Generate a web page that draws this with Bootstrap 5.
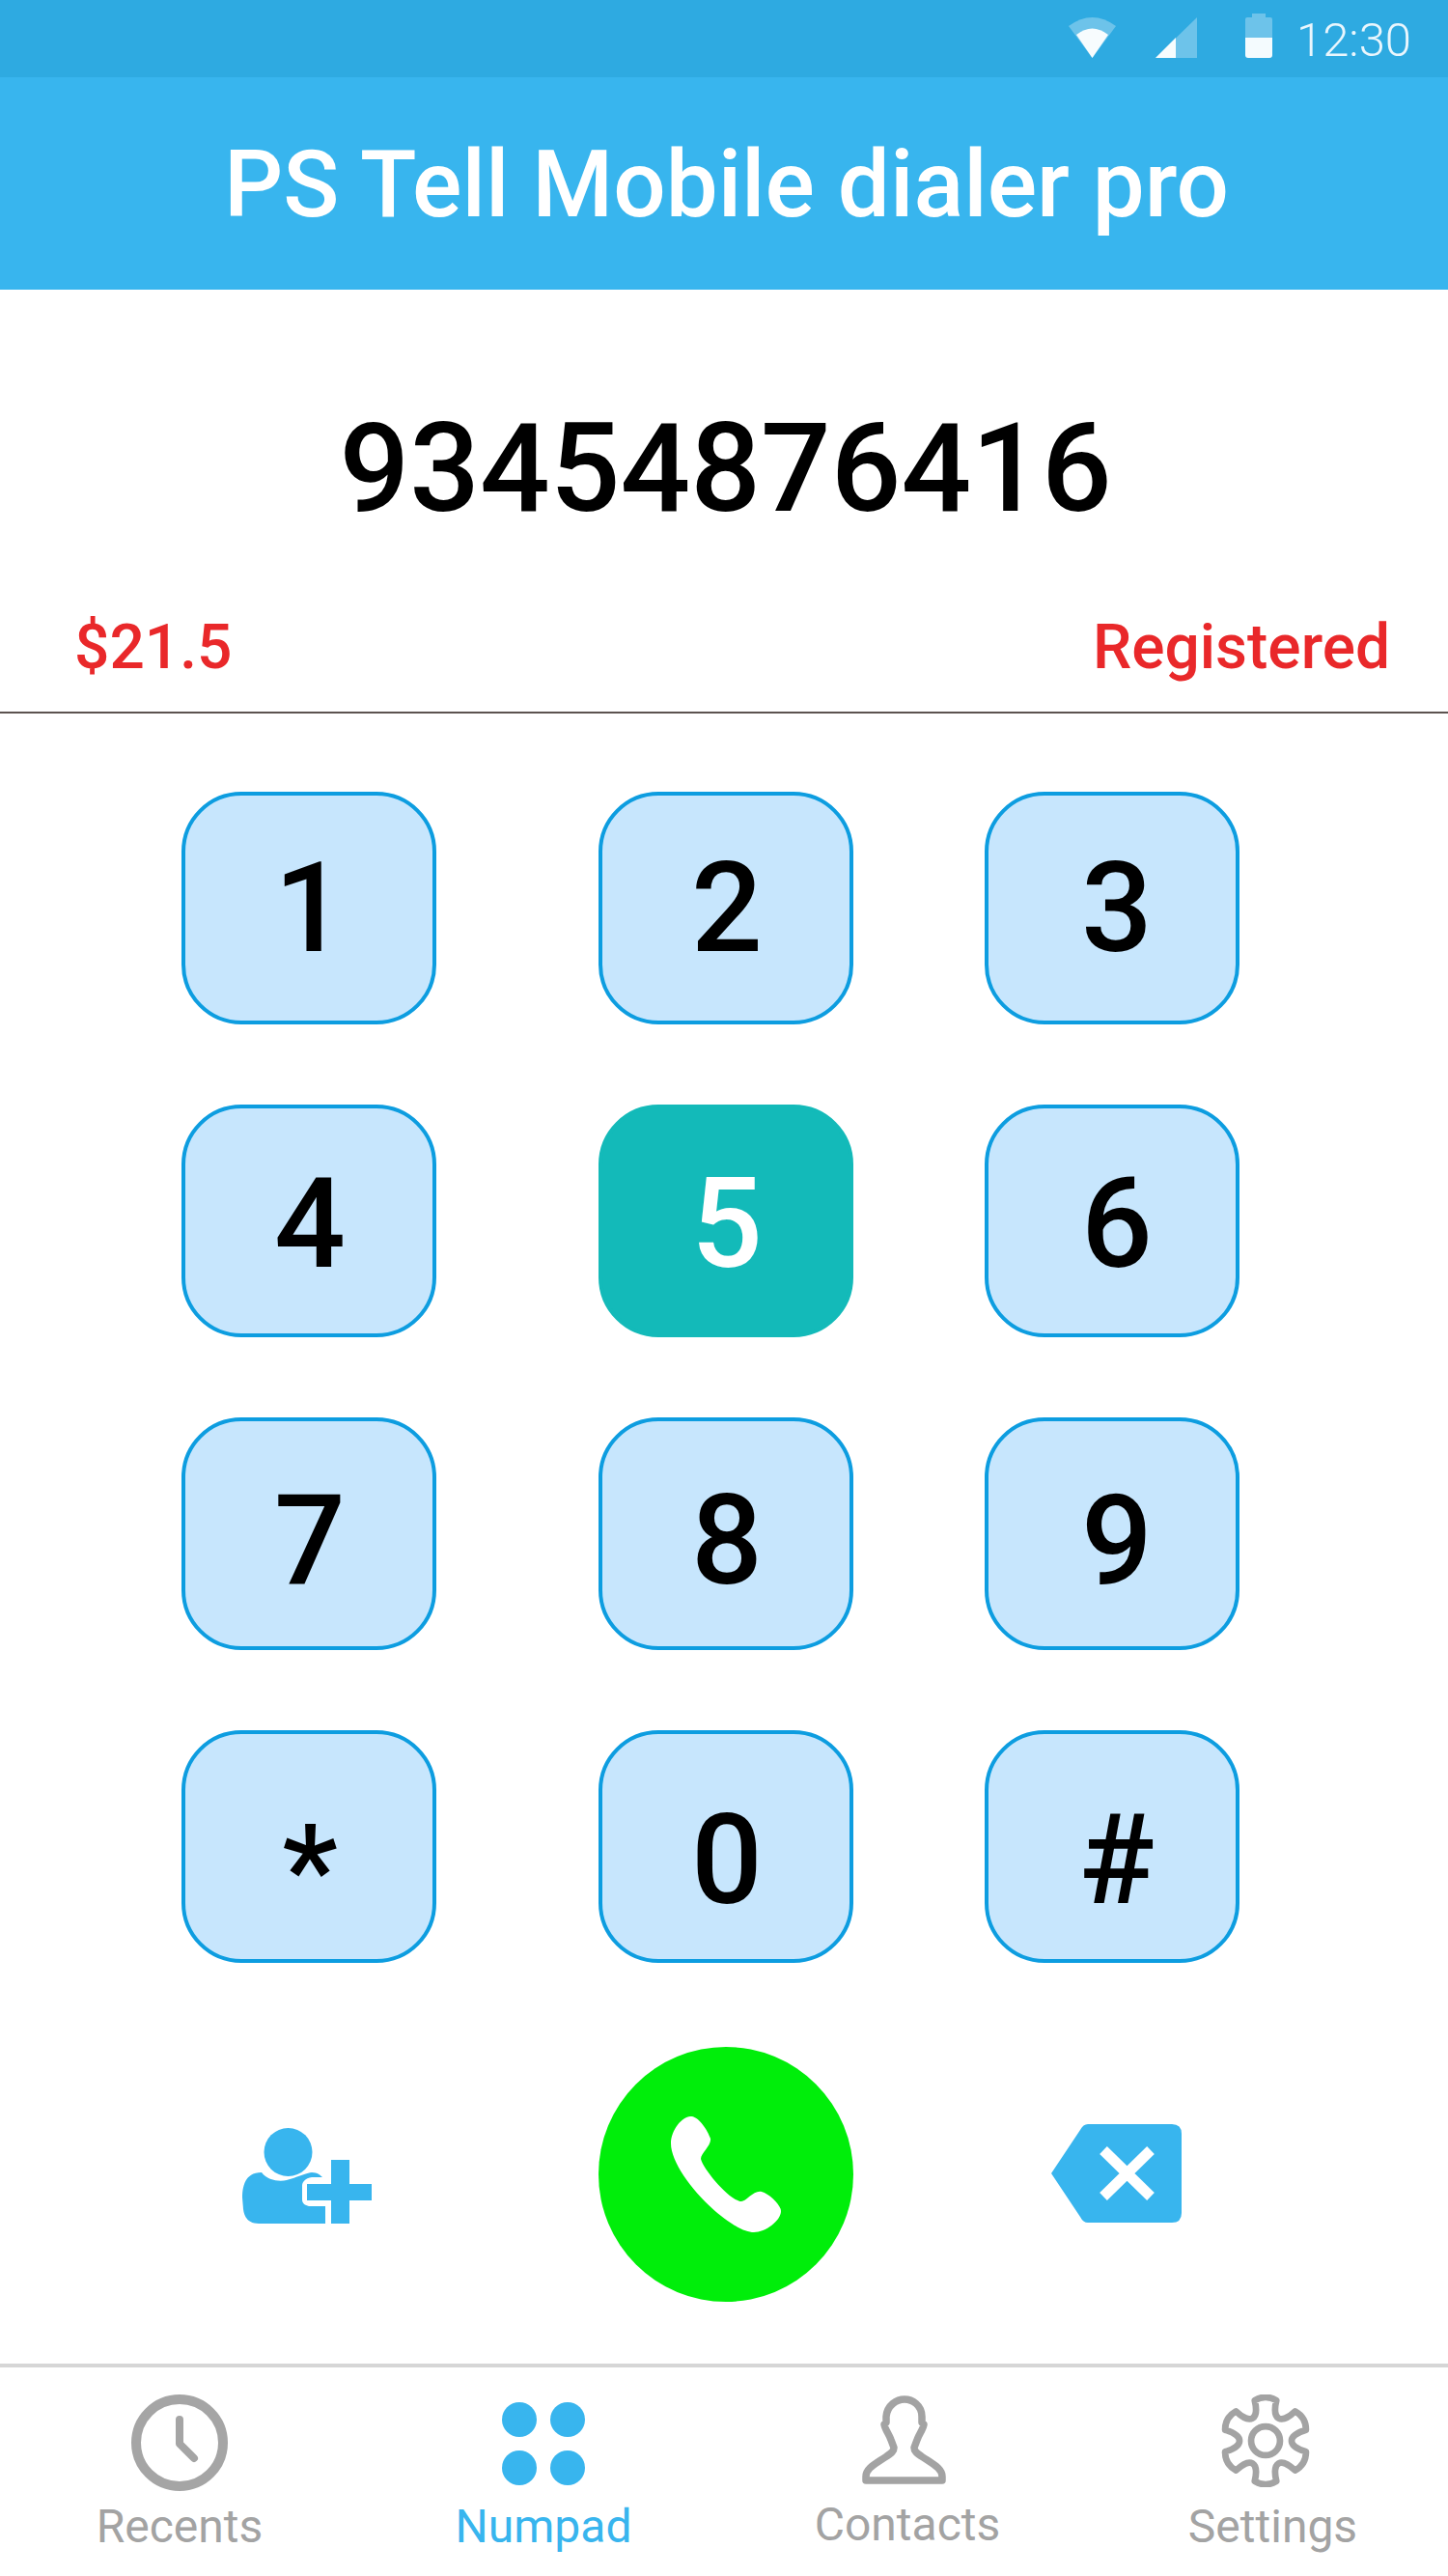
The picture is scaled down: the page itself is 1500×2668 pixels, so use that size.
<!DOCTYPE html>
<html lang="en">
<head>
<meta charset="utf-8">
<title>PS Tell Mobile dialer pro</title>
<link href="https://cdn.jsdelivr.net/npm/bootstrap@5.3.0/dist/css/bootstrap.min.css" rel="stylesheet">
<style>
html,body{margin:0;background:#fff}
body{width:1500px;height:2668px;overflow:hidden;font-family:Roboto,"Liberation Sans",sans-serif}
.status-strip{height:80px;background:#2eaae1;padding-right:38px;color:#e9f6fd}
.status-time{font-size:49px;font-weight:300;line-height:1;margin-left:25px;margin-top:2px}
.ico-wifi{width:49px;height:42px;margin-right:41px;margin-top:-2px}
.ico-signal{width:43px;height:42px;margin-right:50px;margin-top:-2px}
.ico-batt{width:28px;height:46px;margin-top:-6px}
.app-head{height:220px;background:#38b5ee;color:#fff;font-size:96px;font-weight:500;line-height:1;padding:2px 0 0 5px}
.dial-number{height:294px;padding:76px 0 0 3px;font-size:128px;font-weight:500;line-height:1;color:#000}
.info-row{height:145px;padding:0 60px 34px 77px;color:#e9282a;font-size:64px;font-weight:500;line-height:1;border-bottom:2px solid #5c5350}
.pad-grid{display:grid;grid-template-columns:432px 400px 264px;row-gap:83px;padding:81px 0 0 188px}
.pad-key{width:264px;height:241px;border:4px solid #0d9de0;border-radius:62px;background:#c7e6fd;color:#000;font-size:130px;font-weight:500;line-height:1;padding:0 0 0 2px}
.pad-key.is-on{background:#13bab9;border-color:#13bab9;color:#fff}
.pad-key.col-end{padding-left:10px}
.pad-key.row-two{padding-top:6px}
.pad-key.row-three{padding-top:14px}
.pad-key.row-four{padding-top:28px}
.pad-key.row-four.star-key{padding-top:50px}
.act-grid{display:grid;grid-template-columns:432px 400px 264px;padding:87px 0 0 188px;height:415px}
.btn-call{width:264px;height:264px;border-radius:50%;background:#00ee0a;border:0;padding:0}
.ico-phone{width:114px;height:120px}
.ico-add{width:134px;height:99px;margin-left:63px;margin-top:84px}
.ico-back{width:135px;height:102px;margin-left:69px;margin-top:80px}
.tab-strip{height:220px;border-top:4px solid #d6d6d6;padding-left:36px;column-gap:77px}
.tab-item{width:300px;height:216px;font-size:48px;line-height:1;color:#a3a3a3}
.tab-item.is-on{color:#38b5ee}
.tab-art{height:128px;padding-top:28px}
.tab-label{margin-top:13px}
.tab-item.up-label .tab-label{margin-top:11px}
.ico-user{margin-right:7px;margin-top:1px}
.ico-gear{margin-right:12px}
.tab-label.nudge{padding-left:3px}
</style>
</head>
<body>
<div class="status-strip d-flex justify-content-end align-items-center">
  <svg class="ico-wifi" viewBox="0 0 49 42"><path d="M0 9Q24.5-9 49 9L24.5 42Z" fill="#fff" fill-opacity=".3"/><path d="M8 18Q24.5 5 41 18L24.5 42Z" fill="#fff" fill-opacity=".95"/></svg>
  <svg class="ico-signal" viewBox="0 0 43 42"><path d="M43 0V42H0Z" fill="#fff" fill-opacity=".3"/><path d="M21 21V42H0Z" fill="#fff" fill-opacity=".95"/></svg>
  <svg class="ico-batt" viewBox="0 0 28 46"><path d="M7 0H21V4H26Q28 4 28 6V25H0V6Q0 4 2 4H7Z" fill="#fff" fill-opacity=".3"/><path d="M0 25H28V43Q28 46 25 46H3Q0 46 0 43Z" fill="#fff" fill-opacity=".95"/></svg>
  <span class="status-time">12:30</span>
</div>
<header class="app-head d-flex justify-content-center align-items-center">PS Tell Mobile dialer pro</header>
<div class="dial-number d-flex justify-content-center align-items-center">93454876416</div>
<div class="info-row d-flex justify-content-between align-items-end"><span>$21.5</span><span>Registered</span></div>
<div class="pad-grid">
  <button class="btn pad-key" type="button">1</button><button class="btn pad-key" type="button">2</button><button class="btn pad-key col-end" type="button">3</button>
  <button class="btn pad-key row-two" type="button">4</button><button class="btn pad-key row-two is-on" type="button">5</button><button class="btn pad-key row-two col-end" type="button">6</button>
  <button class="btn pad-key row-three" type="button">7</button><button class="btn pad-key row-three" type="button">8</button><button class="btn pad-key row-three col-end" type="button">9</button>
  <button class="btn pad-key row-four star-key" type="button">*</button><button class="btn pad-key row-four" type="button">0</button><button class="btn pad-key row-four col-end" type="button">#</button>
</div>
<div class="act-grid">
  <svg class="ico-add" viewBox="0 0 134 99" fill="#38b5ee"><circle cx="47.500" cy="25" r="25"/><path d="M20 46C26 54 38 56 46 54C54 52 68 46 72 46C78 46 81 49 83 51H72C65 52 62 56 62 60V74C62 78 65 80 69 81H86V99H17C8 99 2 94 1 84L0 72C0 60 3 46 20 46Z"/><path d="M92 33H111V58H134V75H111V99H92V75H67V58H92Z"/></svg>
  <button class="btn btn-call d-flex align-items-center justify-content-center" type="button" aria-label="Call">
    <svg class="ico-phone" viewBox="0 0 114 120" fill="#fff"><path d="M20 0C28-1 38 14 41 23C42 30 31 38 31 44C34 56 62 88 73 88C78 88 86 76 94 78C102 80 114 92 114 98C114 108 98 120 86 120C60 120 0 60 0 28C0 14 12 0 20 0Z"/></svg>
  </button>
  <svg class="ico-back" viewBox="0 0 135 102"><path d="M38 0H125Q135 0 135 10V92Q135 102 125 102H38Q33 102 30 96L0 51L30 6Q33 0 38 0Z" fill="#38b5ee"/><path d="M54 27L103 75M103 27L54 75" stroke="#fff" stroke-width="11" fill="none"/></svg>
</div>
<nav class="tab-strip d-flex">
  <div class="tab-item text-center">
    <div class="tab-art"><svg width="100" height="100" viewBox="0 0 100 100" fill="none" stroke="#a5a5a5"><circle cx="50" cy="50" r="45" stroke-width="10"/><path d="M50 26V51L65 66" stroke-width="8" stroke-linecap="round" stroke-linejoin="round"/></svg></div>
    <div class="tab-label">Recents</div>
  </div>
  <div class="tab-item is-on text-center">
    <div class="tab-art"><svg class="mt-2" width="86" height="86" viewBox="0 0 86 86" fill="#38b5ee"><circle cx="18" cy="18" r="18"/><circle cx="68" cy="18" r="18"/><circle cx="18" cy="68" r="18"/><circle cx="68" cy="68" r="18"/></svg></div>
    <div class="tab-label">Numpad</div>
  </div>
  <div class="tab-item up-label text-center">
    <div class="tab-art"><svg class="ico-user" width="87" height="92" viewBox="0 0 87 92" fill="none" stroke="#a3a3a3" stroke-width="7.500" stroke-linejoin="round"><path d="M44 4C36 4 26 10 25 22V28L23 30C24 36 28 40 30 46L33 54C33 58 30 60 24 64C12 72 4 76 4 84V88H83V84C83 76 75 72 63 64C57 60 54 58 54 54L57 46C59 40 63 36 64 30L62 28V22C62 10 52 4 44 4Z"/></svg></div>
    <div class="tab-label">Contacts</div>
  </div>
  <div class="tab-item text-center">
    <div class="tab-art"><svg class="ico-gear" width="96" height="96" viewBox="0 0 93 93" fill="none" stroke="#a3a3a3" stroke-width="6.500" stroke-linejoin="round"><path d="M76.200 16.800Q87.200 23 87.100 35.600C67.800 41.200 67.800 51.800 87.100 57.400Q87.200 70 76.200 76.200C61.800 62.300 52.600 67.600 57.400 87.100Q46.500 93.500 35.600 87.100C40.400 67.600 31.200 62.300 16.800 76.200Q5.800 70 5.900 57.400C25.200 51.800 25.200 41.200 5.900 35.600Q5.800 23 16.800 16.800C31.200 30.700 40.400 25.400 35.600 5.900Q46.500-.5 57.400 5.900C52.600 25.400 61.800 30.700 76.200 16.800Z"/><circle cx="46.500" cy="46.500" r="14.500"/></svg></div>
    <div class="tab-label nudge">Settings</div>
  </div>
</nav>
</body>
</html>
